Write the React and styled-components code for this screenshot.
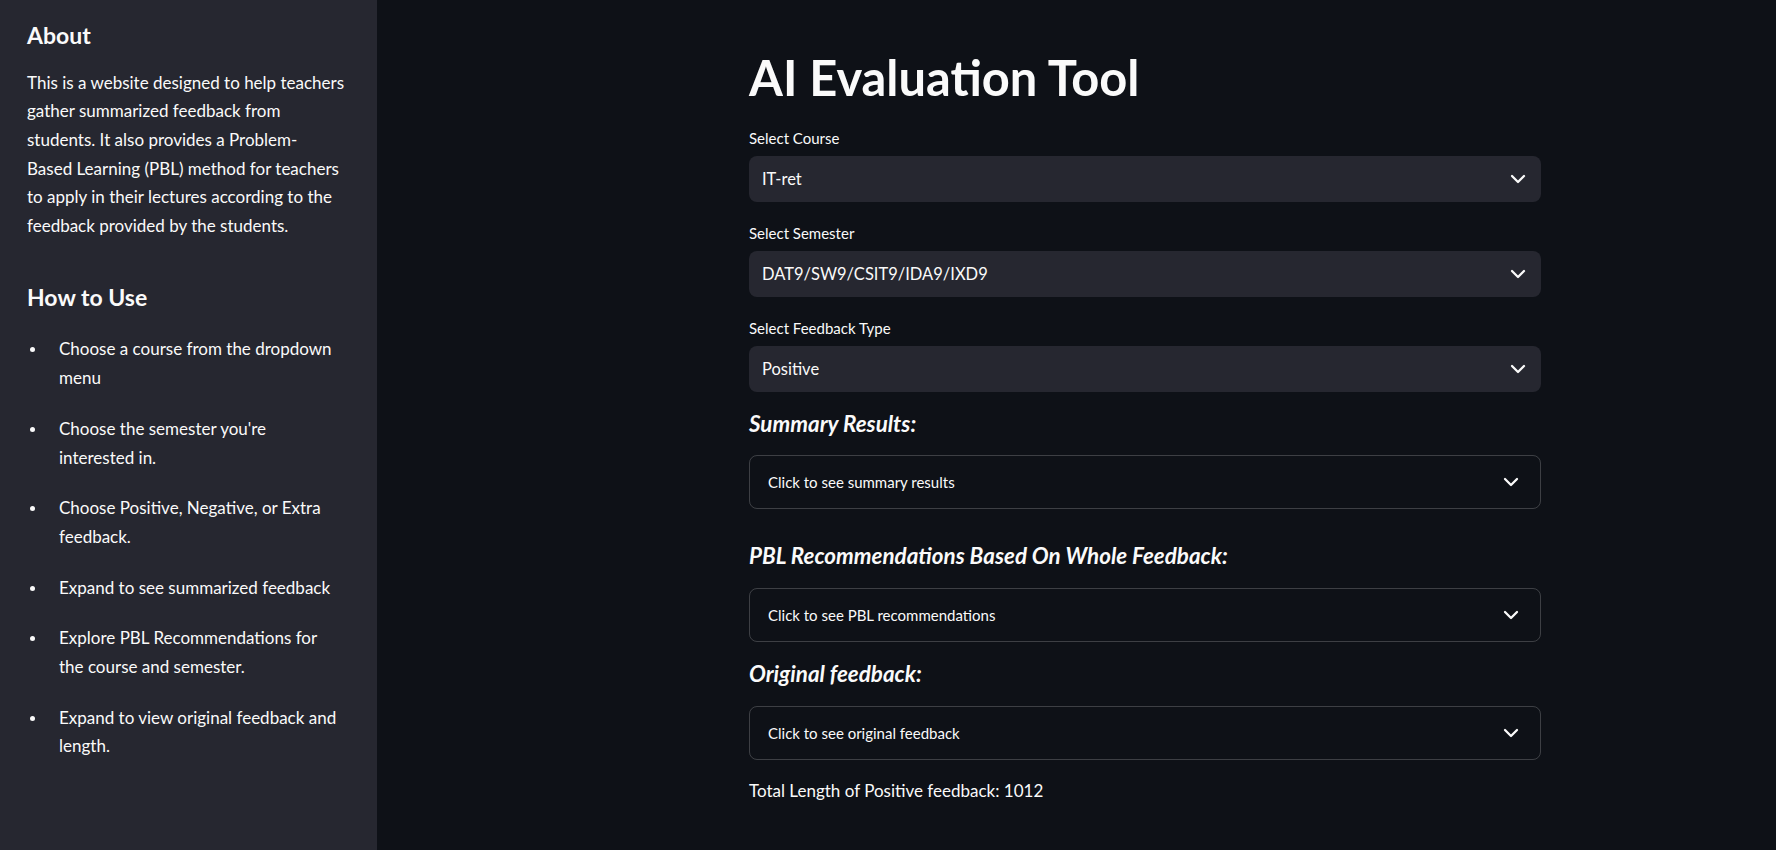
import styled, { createGlobalStyle } from "styled-components";

const GlobalStyle = createGlobalStyle`
  * {
    box-sizing: border-box;
  }

  body {
    margin: 0;
    background: #0e1117;
    color: #fafafa;
    font-family: Lato, "Noto Sans", sans-serif;
  }
`;

const Page = styled.div`
  display: flex;
  min-height: 850px;
`;

const Sidebar = styled.aside`
  width: 377px;
  flex-shrink: 0;
  background: #262730;
  padding: 22px 30px 22px 27px;
`;

const SideHeading = styled.h2`
  margin: ${props => props.$top || 0}px 0 0;
  font-size: 23px;
  font-weight: 700;
  line-height: 1.2;
`;

const SideText = styled.p`
  margin: 19px 0 0;
  font-size: 17px;
  line-height: 28.7px;
`;

const Steps = styled.ul`
  list-style: none;
  margin: 24px 0 0;
  padding: 0 7px 0 0;
  display: flex;
  flex-direction: column;
  gap: 22px;
`;

const Step = styled.li`
  position: relative;
  padding-left: 32px;
  font-size: 17px;
  line-height: 28.7px;

  &::before {
    content: "";
    position: absolute;
    left: 3px;
    top: 12px;
    width: 5px;
    height: 5px;
    border-radius: 50%;
    background: #fafafa;
  }
`;

const Main = styled.main`
  flex: 1;
  padding: 48px 0 40px 372px;
`;

const Column = styled.div`
  width: 792px;
  display: flex;
  flex-direction: column;
`;

const Title = styled.h1`
  margin: 0 0 21px;
  font-size: 48.8px;
  font-weight: 700;
  line-height: 1.2;
`;

const Fields = styled.div`
  display: flex;
  flex-direction: column;
  gap: 21px;
`;

const Field = styled.div`
  display: flex;
  flex-direction: column;
  gap: 8px;
`;

const Label = styled.label`
  font-size: 15px;
  line-height: 20px;
`;

const Select = styled.div`
  height: 46px;
  display: flex;
  align-items: center;
  justify-content: space-between;
  padding: 0 17px 0 13px;
  background: #262730;
  border-radius: 8px;
  font-size: 16.5px;
`;

const Section = styled.h4`
  margin: ${props => props.$top}px 0 18px;
  font-size: 22.4px;
  font-weight: 700;
  font-style: italic;
  line-height: 1.2;
`;

const Expander = styled.div`
  height: 54px;
  display: flex;
  align-items: center;
  justify-content: space-between;
  padding: 0 23px 0 18px;
  border: 1px solid rgba(250, 250, 250, 0.2);
  border-radius: 8px;
  font-size: 15px;
`;

const Total = styled.p`
  margin: 18px 0 0;
  font-size: 17px;
  line-height: 26.4px;
`;

const Chevron = () => (
  <svg width="24" height="24" viewBox="0 0 24 24" fill="none" stroke="#fafafa"
    strokeWidth="2.3" strokeLinecap="round" strokeLinejoin="round" style={{ marginRight: -6 }}>
    <path d="m6 9 6 6 6-6" />
  </svg>
);

const fields = [
  { label: "Select Course", value: "IT-ret" },
  { label: "Select Semester", value: "DAT9/SW9/CSIT9/IDA9/IXD9" },
  { label: "Select Feedback Type", value: "Positive" },
];

const sections = [
  { title: "Summary Results:", hint: "Click to see summary results", top: 19 },
  { title: "PBL Recommendations Based On Whole Feedback:", hint: "Click to see PBL recommendations", top: 34 },
  { title: "Original feedback:", hint: "Click to see original feedback", top: 19 },
];

const steps = [
  "Choose a course from the dropdown menu",
  "Choose the semester you're interested in.",
  "Choose Positive, Negative, or Extra feedback.",
  "Expand to see summarized feedback",
  "Explore PBL Recommendations for the course and semester.",
  "Expand to view original feedback and length.",
];

export default function App() {
  return (
    <>
      <GlobalStyle />
      <Page>
        <Sidebar>
          <SideHeading>About</SideHeading>
          <SideText>
            This is a website designed to help teachers gather summarized feedback from
            students. It also provides a Problem-<br />Based Learning (PBL) method for teachers
            to apply in their lectures according to the feedback provided by the students.
          </SideText>
          <SideHeading $top={43}>How to Use</SideHeading>
          <Steps>
            {steps.map(step => <Step key={step}>{step}</Step>)}
          </Steps>
        </Sidebar>

        <Main>
          <Column>
            <Title>AI Evaluation Tool</Title>
            <Fields>
              {fields.map(f => (
                <Field key={f.label}>
                  <Label>{f.label}</Label>
                  <Select>
                    <span>{f.value}</span>
                    <Chevron />
                  </Select>
                </Field>
              ))}
            </Fields>
            {sections.map(s => (
              <div key={s.title}>
                <Section $top={s.top}>{s.title}</Section>
                <Expander>
                  <span>{s.hint}</span>
                  <Chevron />
                </Expander>
              </div>
            ))}
            <Total>Total Length of Positive feedback: 1012</Total>
          </Column>
        </Main>
      </Page>
    </>
  );
}
